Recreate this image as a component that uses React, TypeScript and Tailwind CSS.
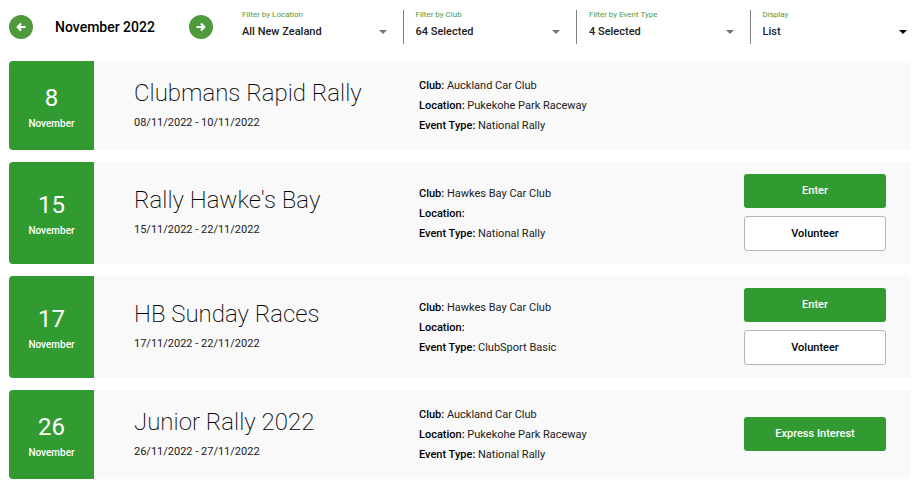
import { useState } from "react";

type RallyEvent = {
  day: number;
  title: string;
  dates: string;
  club: string;
  location: string;
  type: string;
  actions: string[];
};

const EVENTS: RallyEvent[] = [
  {
    day: 8,
    title: "Clubmans Rapid Rally",
    dates: "08/11/2022 - 10/11/2022",
    club: "Auckland Car Club",
    location: "Pukekohe Park Raceway",
    type: "National Rally",
    actions: [],
  },
  {
    day: 15,
    title: "Rally Hawke's Bay",
    dates: "15/11/2022 - 22/11/2022",
    club: "Hawkes Bay Car Club",
    location: "",
    type: "National Rally",
    actions: ["Enter", "Volunteer"],
  },
  {
    day: 17,
    title: "HB Sunday Races",
    dates: "17/11/2022 - 22/11/2022",
    club: "Hawkes Bay Car Club",
    location: "",
    type: "ClubSport Basic",
    actions: ["Enter", "Volunteer"],
  },
  {
    day: 26,
    title: "Junior Rally 2022",
    dates: "26/11/2022 - 27/11/2022",
    club: "Auckland Car Club",
    location: "Pukekohe Park Raceway",
    type: "National Rally",
    actions: ["Express Interest"],
  },
];

function MonthButton({ label, next = false }: { label: string; next?: boolean }) {
  return (
    <button
      type="button"
      aria-label={label}
      className="flex size-6 shrink-0 cursor-pointer items-center justify-center rounded-full bg-[#4f9a3d] text-white"
    >
      <svg viewBox="0 0 10 10" className="size-[10px]" fill="none" stroke="currentColor" strokeWidth="2.1" aria-hidden="true">
        {next ? <path d="M0.5 5h7.6M4.9 1.6l3.4 3.4-3.4 3.4" /> : <path d="M9.5 5H1.9M5.1 1.6L1.7 5l3.4 3.4" />}
      </svg>
    </button>
  );
}

function FilterSelect({ id, label, options, dark = false }: { id: string; label: string; options: string[]; dark?: boolean }) {
  const [value, setValue] = useState(options[0]);

  return (
    <div className="flex min-w-0 flex-1 flex-col">
      <label htmlFor={id} className="text-[8px] leading-[9px] text-[#4f9a3d]">{label}</label>
      <div className="relative mt-[3px]">
        <select
          id={id}
          value={value}
          onChange={(e) => setValue(e.target.value)}
          className="block h-5 w-full cursor-pointer appearance-none bg-transparent pr-5 text-[11px] leading-5 font-medium text-[#212121] outline-none"
        >
          {options.map((o) => <option key={o}>{o}</option>)}
        </select>
        <svg
          viewBox="0 0 8 4"
          className={`pointer-events-none absolute top-2 right-1 h-1 w-2 ${dark ? "text-black" : "text-[#757575]"}`}
          aria-hidden="true"
        >
          <path d="M0 0h8L4 4z" fill="currentColor" />
        </svg>
      </div>
    </div>
  );
}

function Divider() {
  return <div className="w-px self-stretch bg-[#808080]" />;
}

function EventCard({ event }: { event: RallyEvent }) {
  return (
    <article className="grid grid-cols-[85px_minmax(0,1fr)_minmax(0,1fr)_142px] items-center overflow-hidden rounded bg-[#f9f9f9] pr-[25px]">
      <div className="flex flex-col items-center justify-center self-stretch bg-[#319b31] pt-1 text-white">
        <span className="text-2xl leading-7">{event.day}</span>
        <span className="mt-1 text-[10px] leading-4 font-medium">November</span>
      </div>

      <div className="pb-0.5 pl-10">
        <h2 className="text-2xl leading-8 font-extralight text-black">{event.title}</h2>
        <p className="mt-1 text-[11px] leading-5 text-[#212121]">{event.dates}</p>
      </div>

      <div className="pt-[15px] pb-[14px] text-[11px] leading-5 text-[#212121]">
        <p><b className="font-medium text-black">Club:</b> {event.club}</p>
        <p><b className="font-medium text-black">Location:</b> {event.location}</p>
        <p><b className="font-medium text-black">Event Type:</b> {event.type}</p>
      </div>

      <div className="flex flex-col gap-2 pt-3 pb-[13px]">
        {event.actions.map((action) => (
          <button
            key={action}
            type="button"
            className={
              action === "Volunteer"
                ? "h-[35px] cursor-pointer rounded-[3px] border border-[#b5b5b5] bg-white pt-px text-[11px] font-medium text-black"
                : "h-[34px] cursor-pointer rounded-[3px] bg-[#319b31] text-[11px] font-medium text-white"
            }
          >
            {action}
          </button>
        ))}
      </div>
    </article>
  );
}

export default function App() {
  return (
    <div className="min-h-screen bg-white pt-[10px] pr-[5px] pb-3 pl-[9px] font-['Roboto',sans-serif]">
      <header className="flex gap-[29px]">
        <div className="flex h-[34px] w-[204px] shrink-0 items-center">
          <MonthButton label="Previous month" />
          <h1 className="flex-1 pl-[22px] text-sm leading-5 font-medium text-black">November 2022</h1>
          <MonthButton label="Next month" next />
        </div>

        <div className="flex min-w-0 flex-1 gap-3">
          <FilterSelect id="location" label="Filter by Location" options={["All New Zealand"]} />
          <Divider />
          <FilterSelect id="club" label="Filter by Club" options={["64 Selected"]} />
          <Divider />
          <FilterSelect id="event-type" label="Filter by Event Type" options={["4 Selected"]} />
          <Divider />
          <FilterSelect id="display" label="Display" options={["List", "Calendar"]} dark />
        </div>
      </header>

      <main className="mt-[17px] flex flex-col gap-3">
        {EVENTS.map((event) => <EventCard key={event.day} event={event} />)}
      </main>
    </div>
  );
}
